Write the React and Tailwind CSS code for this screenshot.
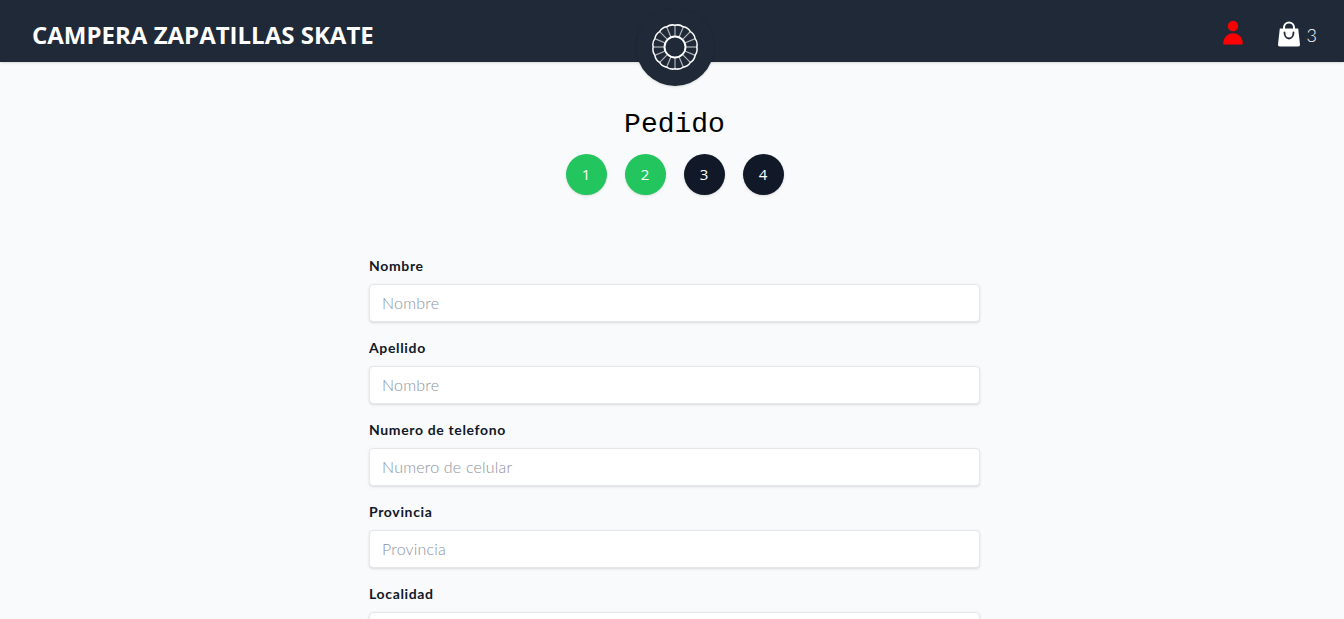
import React from "react";

const rim = (() => {
  const n = 16, R = 21.8, cx = 23, cy = 23;
  let d = "";
  for (let i = 0; i <= n; i++) {
    const a = (i / n) * 2 * Math.PI - Math.PI / 2;
    const x = cx + R * Math.cos(a), y = cy + R * Math.sin(a);
    d += i === 0 ? `M${x.toFixed(2)} ${y.toFixed(2)}` : `A10 10 0 0 1 ${x.toFixed(2)} ${y.toFixed(2)}`;
  }
  return d + "Z";
})();

const spokes = Array.from({ length: 16 }, (_, i) => (i / 16) * 2 * Math.PI - Math.PI / 2);

function Logo() {
  return (
    <svg width="46" height="46" viewBox="0 0 46 46" fill="none" stroke="#fff">
      <path d={rim} strokeWidth="1.5" strokeLinejoin="round" />
      <circle cx="23" cy="23" r="10.500" strokeWidth="1.900" />
      {spokes.map((a, i) => (
        <line
          key={i}
          x1={23 + 10.5 * Math.cos(a)}
          y1={23 + 10.5 * Math.sin(a)}
          x2={23 + 22 * Math.cos(a)}
          y2={23 + 22 * Math.sin(a)}
          strokeWidth="1.200"
          strokeOpacity="0.65"
        />
      ))}
    </svg>
  );
}

function UserIcon() {
  return (
    <svg width="20" height="26" viewBox="0 0 20 26" fill="#ff0000">
      <circle cx="10" cy="7" r="5.200" />
      <path d="M0.200 24.500C0.200 18.500 4.500 14.200 10 14.200S19.800 18.500 19.800 24.500C19.800 25.200 19.400 25.500 18.800 25.500H1.200C.6 25.500 .2 25.200 .2 24.500Z" />
    </svg>
  );
}

function BagIcon() {
  return (
    <svg width="24" height="26" viewBox="0 0 24 26">
      <path d="M7 8V6.500a5 5 0 0 1 10 0V8" fill="none" stroke="#fff" strokeWidth="2" />
      <path d="M2.800 7.500H21.200L23 23.500c.1 1.200-.6 2-1.800 2H2.800C1.600 25.500 .9 24.700 1 23.500Z" fill="#fff" />
      <path d="M7.500 11.500c0 3.500 2 6 4.500 6s4.500-2.500 4.500-6" fill="none" stroke="#1f2937" strokeWidth="1.800" strokeLinecap="round" />
    </svg>
  );
}

function Step({ n, done }) {
  return (
    <div
      className={`flex h-[41px] w-[41px] items-center justify-center rounded-full font-['Open_Sans',sans-serif] text-[15px] font-normal text-white shadow-sm ${done ? "bg-[#22c55e]" : "bg-[#111827]"}`}
    >
      {n}
    </div>
  );
}

function Field({ label, placeholder }) {
  return (
    <div className="flex flex-col">
      <label className="h-[18px] text-sm leading-[18px] font-bold tracking-[0.65px] text-[#111827]">{label}</label>
      <input
        placeholder={placeholder}
        className="mt-[9px] h-[38px] w-full rounded border border-[#e5e7eb] bg-white px-3 pb-[2px] text-base font-light tracking-[0.2px] text-[#374151] shadow placeholder:text-[#8b93a1]"
      />
    </div>
  );
}

export default function App() {
  return (
    <div className="relative h-screen overflow-hidden bg-[#f9fafb] font-['Lato','Open_Sans',sans-serif]">
      <header className="relative z-10 flex h-[62px] items-center justify-between bg-[#1f2937] pr-[27px] pl-8 shadow">
        <h1 className="pt-[8px] font-['Open_Sans',sans-serif] text-[24px] font-bold text-white">CAMPERA ZAPATILLAS SKATE</h1>
        <div className="flex items-center pt-[7px]">
          <div className="-mt-[5px]">
            <UserIcon />
          </div>
          <div className="ml-[34px] flex items-center gap-[6px]">
            <div className="-mt-[2px]">
              <BagIcon />
            </div>
            <span className="text-lg font-light text-white">3</span>
          </div>
        </div>
      </header>
      <div className="absolute top-[8px] left-[636px] z-20 flex h-[78px] w-[78px] items-center justify-center rounded-full bg-[#1f2937] shadow">
        <Logo />
      </div>
      <main className="flex flex-col items-center pt-[43px] pl-[5px]">
        <h2 className="h-[38px] pt-[1px] font-['Liberation_Mono',monospace] text-[28px] leading-[38px] text-black">Pedido</h2>
        <div className="mt-[11px] flex gap-[18px]">
          <Step n="1" done />
          <Step n="2" done />
          <Step n="3" />
          <Step n="4" />
        </div>
        <form className="mt-[62px] flex w-[611px] flex-col gap-[17px]">
          <Field label="Nombre" placeholder="Nombre" />
          <Field label="Apellido" placeholder="Nombre" />
          <Field label="Numero de telefono" placeholder="Numero de celular" />
          <Field label="Provincia" placeholder="Provincia" />
          <Field label="Localidad" placeholder="Localidad" />
        </form>
      </main>
    </div>
  );
}
